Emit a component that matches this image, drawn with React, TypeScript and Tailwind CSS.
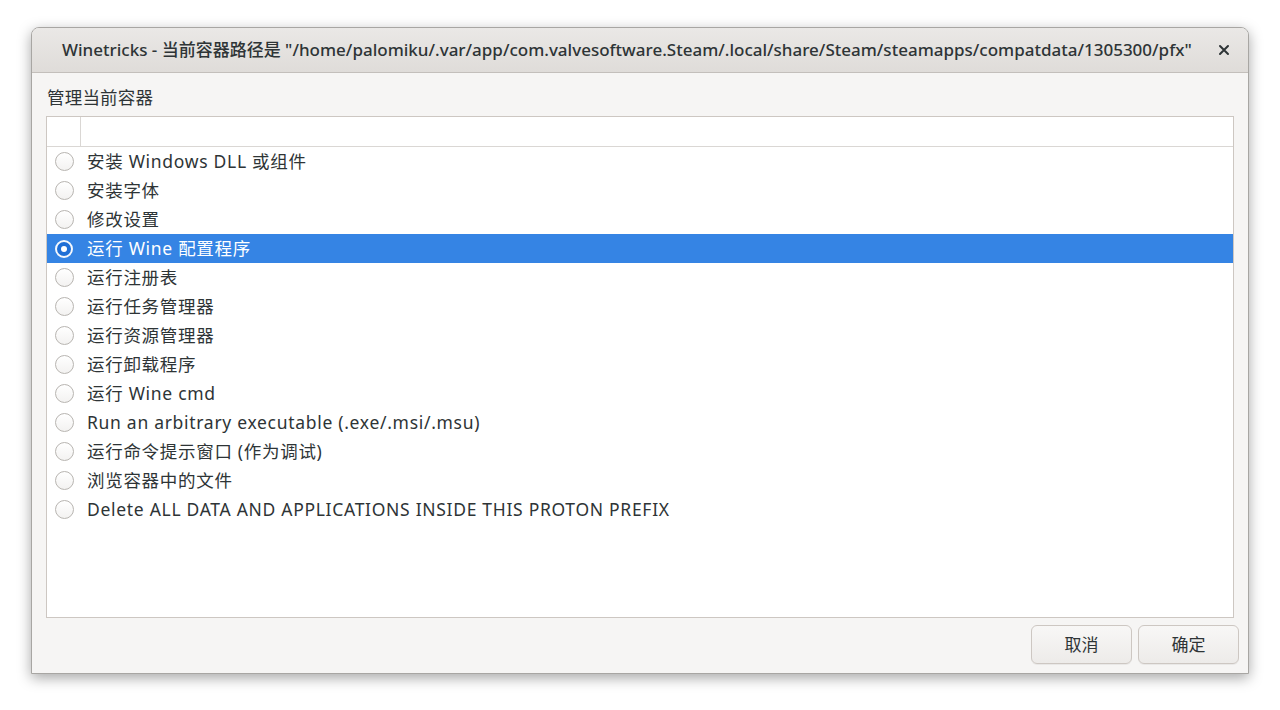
import React from "react"

const FONT = { fontFamily: '"Noto Sans", "Noto Sans CJK SC", sans-serif' }

const items = [
  "安装 Windows DLL 或组件",
  "安装字体",
  "修改设置",
  "运行 Wine 配置程序",
  "运行注册表",
  "运行任务管理器",
  "运行资源管理器",
  "运行卸载程序",
  "运行 Wine cmd",
  "Run an arbitrary executable (.exe/.msi/.msu)",
  "运行命令提示窗口 (作为调试)",
  "浏览容器中的文件",
  "Delete ALL DATA AND APPLICATIONS INSIDE THIS PROTON PREFIX",
]

function Radio({ checked }: { checked: boolean }) {
  if (checked) {
    return (
      <span className="w-[18px] h-[18px] rounded-full border-2 border-[#f4f8fd] bg-[#1f6fd6] flex items-center justify-center">
        <span className="w-[6px] h-[6px] rounded-full bg-white" />
      </span>
    )
  }
  return <span className="w-[19px] h-[19px] rounded-full border border-[#b8b5b1] bg-gradient-to-b from-white to-[#f3f2f1]" />
}

export default function App() {
  const selected = 3
  return (
    <div className="w-[1280px] h-[710px] bg-white pt-[27px] pl-[31px]" style={FONT}>
      <div className="w-[1218px] h-[647px] flex flex-col rounded-t-[8px] border border-[#a8a6a3] bg-[#f6f5f4] shadow-[0_4px_14px_rgba(0,0,0,0.35)] overflow-hidden">
        {/* title bar */}
        <div className="h-[45px] shrink-0 flex items-center bg-gradient-to-b from-[#eae8e6] to-[#dfdcd9] border-b border-[#c3bfbb] text-[#2e3436]">
          <div className="flex-1 pl-[30px] text-[17px] font-medium whitespace-nowrap">
            Winetricks - 当前容器路径是 "/home/palomiku/.var/app/com.valvesoftware.Steam/.local/share/Steam/steamapps/compatdata/1305300/pfx"
          </div>
          <div className="w-[44px] flex justify-center pr-[5px]">
            <svg width="12" height="12" viewBox="0 0 12 12">
              <path d="M2 2 L10 10 M10 2 L2 10" stroke="#2e3436" strokeWidth="2" strokeLinecap="round" />
            </svg>
          </div>
        </div>

        {/* body */}
        <div className="flex-1 flex flex-col px-[14px] pt-[14px] pb-[8px]">
          <div className="h-[21px] pl-[1px] mb-[8px] text-[17.5px] leading-[21px] tracking-[0.2px] text-[#2e3436]">管理当前容器</div>
          <div className="h-[502px] bg-white border border-[#cdc7c2] flex flex-col">
            <div className="h-[30px] shrink-0 flex border-b border-[#dad7d4]">
              <div className="w-[34px] border-r border-[#dad7d4]" />
              <div className="flex-1" />
            </div>
            {items.map((t, i) => {
              const sel = i === selected
              return (
                <div
                  key={t}
                  className={
                    "h-[29px] shrink-0 flex items-center text-[17.5px] tracking-[0.7px] " +
                    (sel ? "bg-[#3584e4] text-white" : "text-[#2e3436]")
                  }
                >
                  <div className="w-[40px] pl-[8px] flex items-center">
                    <Radio checked={sel} />
                  </div>
                  <span className="whitespace-nowrap">{t}</span>
                </div>
              )
            })}
          </div>
          <div className="flex justify-end gap-[6px] mt-[7px] -mr-[5px]">
            {["取消", "确定"].map((b) => (
              <button
                key={b}
                className="w-[101px] h-[39px] rounded-[6px] border border-[#cdc7c2] bg-gradient-to-b from-[#f8f7f6] to-[#edebe9] text-[17px] text-[#2e3436] shadow-[0_1px_0_rgba(0,0,0,0.05)]"
              >
                {b}
              </button>
            ))}
          </div>
        </div>
      </div>
    </div>
  )
}
